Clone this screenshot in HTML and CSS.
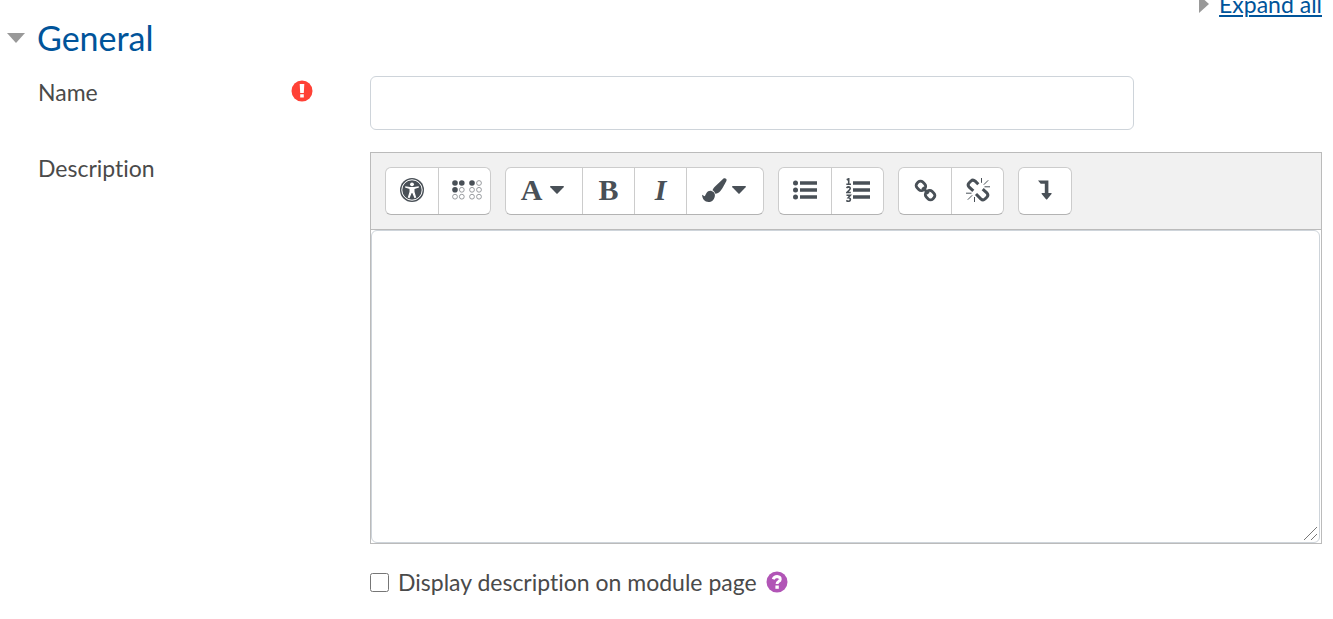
FILE: index.html
```html
<!DOCTYPE html>
<html lang="en">
<head>
<meta charset="utf-8">
<title>General</title>
<link rel="stylesheet" href="styles.css">
</head>
<body>
<main class="page">
  <div class="expand">
    <svg class="expand-arrow" width="10" height="18" viewBox="0 0 10 18" aria-hidden="true"><path d="M0 0L10 9L0 18Z"/></svg>
    <a href="#general">Expand all</a>
  </div>
  <form>
    <h2 class="heading" id="general">
      <svg class="heading-arrow" width="18" height="10" viewBox="0 0 18 10" aria-hidden="true"><path d="M0 0H18L9 10Z"/></svg>
      <span>General</span>
    </h2>
    <div class="row">
      <div class="row-label">
        <label for="name">Name</label>
        <svg class="required" width="22" height="22" viewBox="0 0 22 22" role="img" aria-label="Required"><circle cx="11" cy="11" r="10.5" fill="#ff4136"/><path fill="#fff" d="M8.7 4H13.3L12.8 13H9.2ZM9.2 14.2H12.8V17.5H9.2Z"/></svg>
      </div>
      <div class="row-field"><input class="text-input" id="name" type="text"></div>
    </div>
    <div class="row">
      <div class="row-label"><label for="description">Description</label></div>
      <div class="row-field">
        <div class="editor">
          <div class="toolbar" role="toolbar" aria-label="Editor">
            <div class="group">
              <button type="button" class="tool" aria-label="Accessibility checker">
                <svg width="24" height="24" viewBox="0 0 24 24"><circle cx="12" cy="12" r="12"/><circle cx="12" cy="12" r="10.2" fill="none" stroke="#fff" stroke-width="1"/><g fill="#fff"><circle cx="12" cy="6.3" r="1.9"/><path d="M5.3 8.2L10 9H14L18.7 8.2L19 9.5L14.5 10.9V13.7L16.2 19.6L14.5 20.2L12.3 15H11.7L9.5 20.2L7.8 19.6L9.5 13.7V10.9L5 9.5Z"/></g></svg>
              </button>
              <button type="button" class="tool" aria-label="Screenreader helper">
                <svg class="braille" width="30" height="20" viewBox="0 0 30 20"><g><circle cx="3" cy="3" r="2.8"/><circle cx="9.8" cy="3" r="2.8"/><circle cx="3" cy="9.8" r="2.8"/><circle cx="20" cy="3" r="2.8"/></g><g fill="none" stroke="#8d9195" stroke-width="0.9"><circle cx="27" cy="3" r="2.4"/><circle cx="9.8" cy="9.8" r="2.4"/><circle cx="20" cy="9.8" r="2.4"/><circle cx="27" cy="9.8" r="2.4"/><circle cx="3" cy="16.7" r="2.4"/><circle cx="9.8" cy="16.7" r="2.4"/><circle cx="20" cy="16.7" r="2.4"/><circle cx="27" cy="16.7" r="2.4"/></g></svg>
              </button>
            </div>
            <div class="group">
              <button type="button" class="tool tool-menu" aria-label="Paragraph styles"><span>A</span><svg width="14" height="8" viewBox="0 0 14 8"><path d="M.7 0H13.3Q14.4 .2 13.6 1.2L7.6 7.4Q7 8 6.4 7.4L.4 1.2Q-.4 .2 .7 0Z"/></svg></button>
              <button type="button" class="tool" aria-label="Bold">B</button>
              <button type="button" class="tool tool-italic" aria-label="Italic">I</button>
              <button type="button" class="tool tool-menu" aria-label="Font colour">
                <svg width="25" height="24" viewBox="0 0 25 24"><path d="M22.2 .2C23.7-.1 25 1 24.5 2.6C23.9 4.5 20.3 10.8 18.4 13.1C16.8 15 15.2 15.8 13.4 15.8C12.5 13.8 11.7 13 10.5 12.3C11 10.6 11.8 9.5 13.3 8.2L20.7 1.3Q21.4 .4 22.2 .2ZM10 13.2C11.8 13.8 12.6 14.8 12.9 16.7C13 21 10.3 24 6.7 24C2.6 24 .5 21 0 16.8L2.6 18.2C3.3 18 3.6 16.4 4.5 15C5.8 13.1 7.8 12.3 10 13.2Z"/></svg>
                <svg width="14" height="8" viewBox="0 0 14 8"><path d="M.7 0H13.3Q14.4 .2 13.6 1.2L7.6 7.4Q7 8 6.4 7.4L.4 1.2Q-.4 .2 .7 0Z"/></svg>
              </button>
            </div>
            <div class="group">
              <button type="button" class="tool" aria-label="Unordered list">
                <svg width="24" height="24" viewBox="0 0 24 24"><circle cx="2.5" cy="5" r="2.5"/><circle cx="2.5" cy="12" r="2.5"/><circle cx="2.5" cy="19" r="2.5"/><path d="M7 3.3H24V6.7H7ZM7 10.3H24V13.7H7ZM7 17.3H24V20.7H7Z"/></svg>
              </button>
              <button type="button" class="tool" aria-label="Ordered list">
                <svg width="24" height="24" viewBox="0 0 24 24"><path d="M7 3.3H24V6.7H7ZM7 10.3H24V13.7H7ZM7 17.3H24V20.7H7Z"/><g fill="none" stroke="#495057" stroke-width="1.6"><path d="M.7 1.8L2.7 .8V6M.3 6.2H5M.6 10Q1.2 8.9 2.5 8.9Q4.3 9 4.2 10.6Q4 11.8 .8 14.5H4.8M.5 17.3H4.3L2.3 19.7Q4.4 19.7 4.4 21.5Q4.3 23.3 2.3 23.3Q1.1 23.3 .3 22.4"/></g></svg>
              </button>
            </div>
            <div class="group">
              <button type="button" class="tool" aria-label="Link">
                <svg width="23" height="23" viewBox="0 0 24 24" fill="none" stroke="#495057" stroke-width="3"><rect x="-4.8" y="-4.2" width="9.6" height="8.4" rx="3.4" transform="translate(7.2 7.2) rotate(45)"/><rect x="-4.8" y="-4.2" width="9.6" height="8.4" rx="3.4" transform="translate(16.8 16.8) rotate(45)"/><path d="M8.8 8.8L15.2 15.2"/></svg>
              </button>
              <button type="button" class="tool" aria-label="Unlink">
                <svg width="24" height="24" viewBox="0 0 24 24" fill="none" stroke="#495057"><path stroke-width="3" d="M7.3 12.9L3.2 9.2Q1.2 7 3 5L5 3Q7 1.2 9.2 3.2L12.3 6.3M16.7 11.1L20.8 14.8Q22.8 17 21 19L19 21Q17 22.8 14.8 20.8L10 16"/><path stroke-width="1" d="M15.5 0V4.8M22.2 2.3L17.8 6.7M18.5 8.8H24M8.5 19V24M1.8 21.7L6.2 17.3M0 15.2H5.5"/></svg>
              </button>
            </div>
            <div class="group">
              <button type="button" class="tool" aria-label="Show more buttons">
                <svg width="14" height="20" viewBox="0 0 14 20"><path d="M0 .5H10.4V13H13.2Q14 13.2 13.5 14L9.2 19.2Q8.6 19.8 8 19.2L3.7 14Q3.2 13.2 4 13H6.8V3.8H2.7Z"/></svg>
              </button>
            </div>
          </div>
          <textarea class="editor-area" id="description"></textarea>
        </div>
      </div>
    </div>
    <div class="row">
      <div class="row-label"></div>
      <div class="row-field check">
        <input class="check-box" id="show" type="checkbox">
        <label for="show">Display description on module page</label>
        <button type="button" class="help" aria-label="Help">
          <svg width="22" height="22" viewBox="0 0 22 22"><circle cx="11" cy="11" r="10.5" fill="#b155b6"/><path d="M7.2 8.3Q8.3 5.6 11.1 5.6Q14.3 5.8 14.2 8.4Q14.1 9.7 12.6 10.5Q11 11.4 11.1 13" fill="none" stroke="#fff" stroke-width="3"/><path d="M9.4 14.5H12.8V17.8H9.4Z" fill="#fff"/></svg>
        </button>
      </div>
    </div>
  </form>
</main>
</body>
</html>
```
FILE: styles.css
```css
* {
  box-sizing: border-box;
}

body {
  margin: 0;
  background: #fff;
  color: #4a4a4a;
  font: 23px/32px Lato, sans-serif;
  font-variant-ligatures: none;
}

/* The top line is partly scrolled out of view */
.page {
  margin-top: -12px;
  padding: 0 11px 0 7px;
}

.expand {
  display: flex;
  align-items: center;
  justify-content: flex-end;
  gap: 10px;
}

.expand a {
  color: #00549a;
  text-decoration-thickness: 2px;
  text-underline-offset: 2px;
}

.expand-arrow,
.heading-arrow {
  fill: #999;
}

.heading {
  display: flex;
  align-items: center;
  gap: 12px;
  margin: 0 0 20px;
  color: #00549a;
  font-size: 34px;
  font-weight: 400;
  line-height: 36px;
}

.row {
  display: grid;
  grid-template-columns: 332px minmax(0, 1fr);
  margin: 0 0 22px 31px;
}

.row-label {
  display: flex;
  align-items: flex-start;
  justify-content: space-between;
  padding-right: 57px;
}

.required {
  margin-top: 4px;
}

.text-input {
  display: block;
  width: 80.2%;
  height: 54px;
  padding: 0 16px;
  border: 1px solid #ced4da;
  border-radius: 6px;
  font: inherit;
}

.editor {
  border: 1px solid #bbb;
}

.toolbar {
  display: flex;
  flex-wrap: wrap;
  gap: 14px;
  padding: 14px;
  border-bottom: 1px solid #bbb;
  background: #f1f1f1;
}

.group {
  display: flex;
  height: 48px;
  border: 1px solid #ccc;
  border-bottom-color: #b3b3b3;
  border-radius: 6px;
  background: #fff;
  overflow: hidden;
}

.tool {
  display: flex;
  align-items: center;
  justify-content: center;
  gap: 8px;
  width: 52px;
  padding: 0 0 2px;
  border: 0;
  background: none;
  color: #495057;
  fill: #495057;
  font: bold 30px/44px "Liberation Serif", serif;
}

.tool + .tool {
  border-left: 1px solid #ccc;
}

.tool-menu {
  width: 76px;
  padding-right: 3px;
}

.tool + .tool-menu {
  width: 77px;
  gap: 5px;
}

.tool-italic {
  font-style: italic;
}

.braille {
  margin-left: 4px;
}

.editor-area {
  display: block;
  width: calc(100% - 1px);
  height: 313px;
  padding: 8px 16px;
  border: 1px solid #ced4da;
  border-radius: 6px;
  font: inherit;
  resize: both;
}

.editor-area::-webkit-resizer {
  background: linear-gradient(135deg, transparent 47%, #777 47%, #777 52%, transparent 52%, transparent 74%, #777 74%, #777 79%, transparent 79%) 0 0 / 13px 13px no-repeat;
}

.check {
  display: flex;
  align-items: center;
  gap: 9px;
}

.check-box {
  width: 19px;
  height: 19px;
  margin: 0;
}

.help {
  display: flex;
  padding: 0;
  border: 0;
  background: none;
}
```
